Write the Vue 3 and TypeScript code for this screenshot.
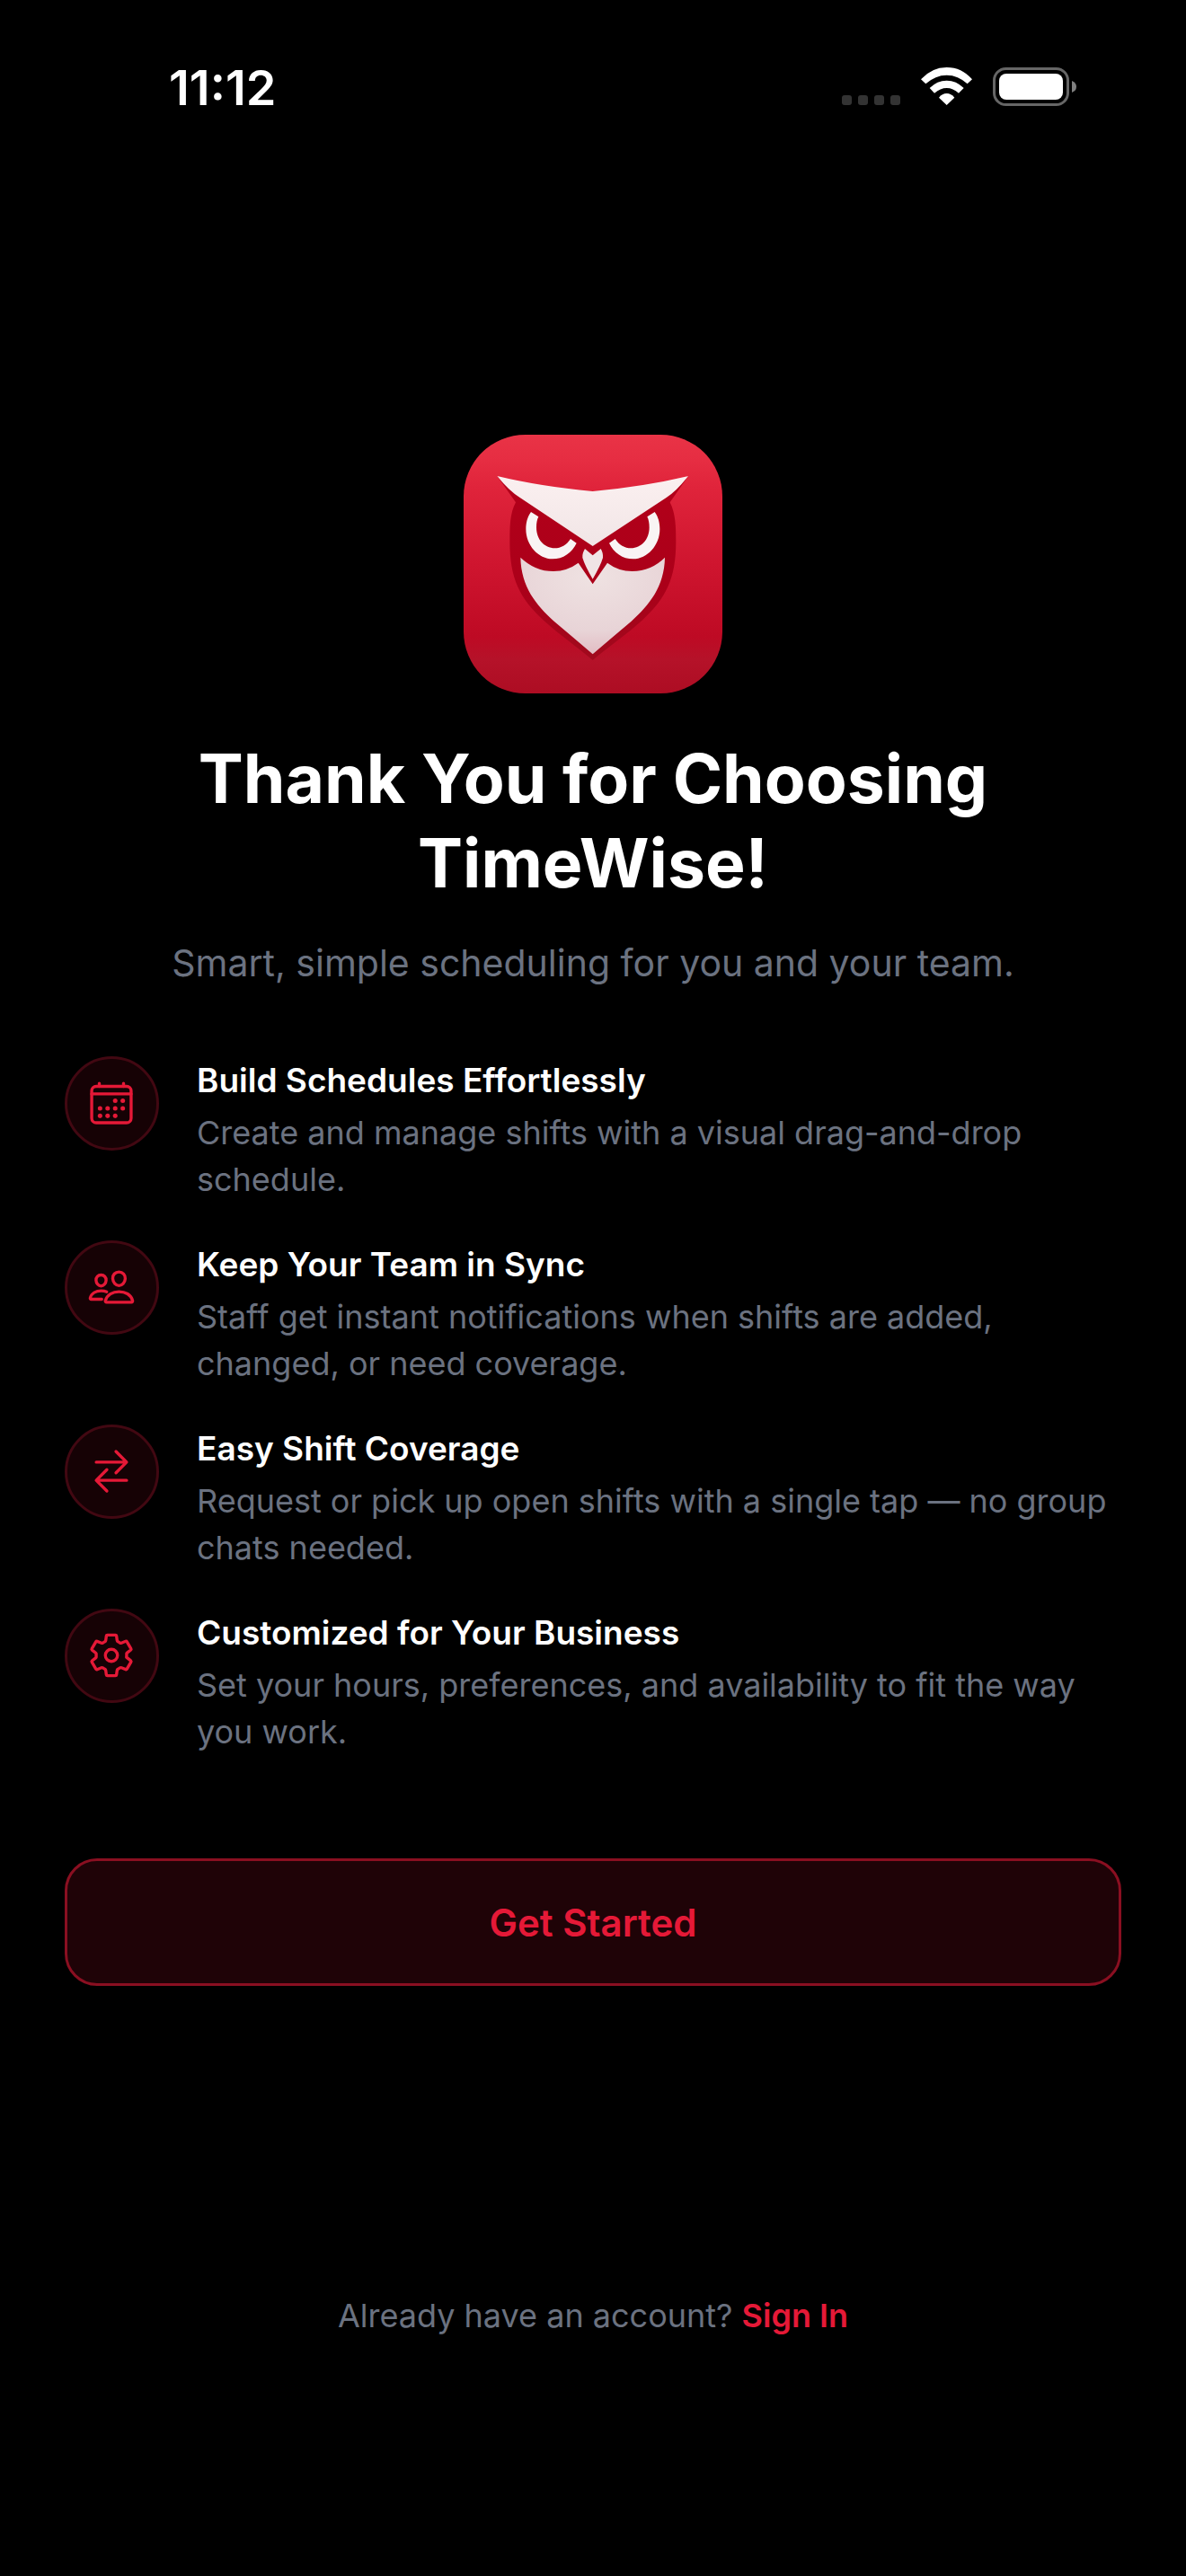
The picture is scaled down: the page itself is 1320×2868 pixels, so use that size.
<script setup lang="ts">
interface Feature {
  icon: 'calendar' | 'people' | 'swap' | 'settings'
  title: string
  text: string
}

const features: Feature[] = [
  {
    icon: 'calendar',
    title: 'Build Schedules Effortlessly',
    text: 'Create and manage shifts with a visual drag-and-drop schedule.',
  },
  {
    icon: 'people',
    title: 'Keep Your Team in Sync',
    text: 'Staff get instant notifications when shifts are added, changed, or need coverage.',
  },
  {
    icon: 'swap',
    title: 'Easy Shift Coverage',
    text: 'Request or pick up open shifts with a single tap — no group chats needed.',
  },
  {
    icon: 'settings',
    title: 'Customized for Your Business',
    text: 'Set your hours, preferences, and availability to fit the way you work.',
  },
]

const calendarDots: [number, number][] = [
  [296, 232], [376, 232],
  [136, 312], [216, 312], [296, 312], [376, 312],
  [136, 392], [216, 392], [296, 392],
]
</script>

<template>
  <div class="screen">
    <header class="status">
      <time class="clock">11:12</time>
      <div class="indicators">
        <svg class="cell" viewBox="0 0 65 11" aria-hidden="true">
          <rect v-for="n in 4" :key="n" :x="(n - 1) * 18" y="0" width="11" height="11" rx="3" />
        </svg>
        <svg class="wifi" viewBox="0 0 171 126" aria-hidden="true">
          <path d="M0 40Q36 0 86 0T171 40L155 55Q124 26 86 26T16 55Z" />
          <path d="M29 69Q54 44 86 44T143 69L126 86Q107 69 86 69T45 86Z" />
          <path d="M60 101Q71 87 86 87T112 101L86 126Z" />
        </svg>
        <svg class="battery" viewBox="0 0 93 43" aria-hidden="true">
          <rect x="1.5" y="1.5" width="82" height="40" rx="13" fill="none" stroke="#666" stroke-width="3" />
          <rect x="7" y="7" width="71" height="29" rx="8" fill="#fff" />
          <path d="M88 15q5 2 5 6.500t-5 6.500z" fill="#808080" />
        </svg>
      </div>
    </header>

    <main class="content">
      <svg class="logo" viewBox="48 42 864 864" role="img" aria-label="TimeWise">
        <defs>
          <linearGradient id="tile" x1="0" y1="0" x2="0" y2="1">
            <stop offset="0" stop-color="#e93346" />
            <stop offset="0.1" stop-color="#e62d42" />
            <stop offset="0.2" stop-color="#e0243b" />
            <stop offset="0.5" stop-color="#cf152f" />
            <stop offset="0.78" stop-color="#be0a24" />
            <stop offset="0.87" stop-color="#b51229" />
            <stop offset="1" stop-color="#ad0d23" />
          </linearGradient>
          <linearGradient id="body" x1="0" y1="0" x2="0" y2="1">
            <stop offset="0" stop-color="#b3001a" />
            <stop offset="0.6" stop-color="#ab0019" />
            <stop offset="1" stop-color="#a00a1d" />
          </linearGradient>
          <linearGradient id="brow" x1="0" y1="0" x2="0" y2="1">
            <stop offset="0" stop-color="#fbf0f0" />
            <stop offset="1" stop-color="#f1e5e6" />
          </linearGradient>
          <radialGradient id="face" cx="0.5" cy="0.2" r="0.8">
            <stop offset="0" stop-color="#efe2e2" />
            <stop offset="0.7" stop-color="#e8d4d7" />
            <stop offset="1" stop-color="#e2bcc3" />
          </radialGradient>
        </defs>
        <rect x="48" y="42" width="864" height="864" rx="206" fill="url(#tile)" />
        <path
          fill="url(#body)"
          d="M160 180L222 268C202 305 202 350 202 400C202 520 235 590 315 662C370 712 430 752 479 795C528 752 589 712 644 662C724 590 757 520 757 400C757 350 756 305 737 268L798 180L479 300Z"
        />
        <path
          fill="url(#brow)"
          d="M160 180Q300 214 479 231Q658 214 798 180Q760 230 725 252L479 414L236 252Q200 230 160 180Z"
        />
        <path
          id="eye"
          fill="#f9f4f4"
          d="M273 300C260 318 256 338 256 357C256 412 298 457 345 457C380 457 410 436 425 404L405 390C392 410 373 421 352 421C318 421 291 392 291 352C291 338 293 326 298 316Z"
        />
        <use href="#eye" transform="translate(959 0) scale(-1 1)" />
        <path
          fill="url(#face)"
          d="M238 452Q286 498 348 498Q395 497 431 470L479 541L528 470Q565 498 611 498Q675 497 720 452C718 550 668 610 608 665Q540 722 479 775Q418 722 350 665C290 610 240 550 238 452Z"
        />
        <path fill="#f0e4e5" d="M453 423L479 445L506 423C511 432 514 440 513 453Q505 480 479 524Q453 480 445 453C444 440 448 432 453 423Z" />
      </svg>

      <h1 class="title">Thank You for Choosing TimeWise!</h1>
      <p class="subtitle">Smart, simple scheduling for you and your team.</p>

      <ul class="features">
        <li v-for="feature in features" :key="feature.icon" class="feature">
          <span class="badge">
            <svg class="icon" viewBox="0 0 512 512" aria-hidden="true">
              <template v-if="feature.icon === 'calendar'">
                <rect x="48" y="80" width="416" height="384" rx="48" />
                <path d="M128 48v32M384 48v32M464 160H48" />
                <circle v-for="[x, y] in calendarDots" :key="`${x}-${y}`" class="dot" :cx="x" :cy="y" r="24" />
              </template>
              <template v-else-if="feature.icon === 'people'">
                <path d="M402 168c-2.930 40.670-33.100 72-66 72s-63.120-31.320-66-72c-3-42.310 26.370-72 66-72s69 30.460 66 72z" />
                <path d="M336 304c-65.170 0-127.840 32.370-143.540 95.410-2.080 8.340 3.150 16.590 11.720 16.590h263.650c8.570 0 13.770-8.250 11.720-16.590C463.850 335.360 401.180 304 336 304z" />
                <path d="M200 185.940c-2.340 32.480-26.720 58.060-53 58.060s-50.700-25.570-53-58.060C91.610 152.150 115.340 128 147 128s55.390 24.770 53 57.940z" />
                <path d="M206 306c-18.050-8.270-37.930-11.450-59-11.450-52 0-102.100 25.850-114.650 76.200-1.650 6.660 2.530 13.250 9.370 13.250H154" />
              </template>
              <template v-else-if="feature.icon === 'swap'">
                <path d="M304 48l112 112-112 112M398.870 160H96M208 464L96 352l112-112M114 352h302" />
              </template>
              <template v-else>
                <circle cx="256" cy="256" r="64" />
                <path d="M416.390 256a154.340 154.340 0 0 1-1.530 20.790l45.210 35.460a10.810 10.810 0 0 1 2.450 13.750l-42.770 74a10.810 10.810 0 0 1-13.140 4.590l-44.900-18.080a16.110 16.110 0 0 0-15.170 1.750A164.480 164.480 0 0 1 325 400.800a15.940 15.940 0 0 0-8.820 12.140l-6.730 47.890a11.080 11.080 0 0 1-10.680 9.170h-85.540a11.110 11.110 0 0 1-10.690-8.870l-6.720-47.820a16.070 16.070 0 0 0-9-12.220 155.300 155.300 0 0 1-21.460-12.570 16 16 0 0 0-15.110-1.710l-44.890 18.070a10.810 10.810 0 0 1-13.140-4.580l-42.770-74a10.800 10.800 0 0 1 2.450-13.750l38.210-30a16.050 16.050 0 0 0 6-14.080c-.36-4.170-.58-8.330-.58-12.500s.21-8.270.58-12.350a16 16 0 0 0-6.070-13.940l-38.190-30A10.810 10.810 0 0 1 49.480 186l42.770-74a10.810 10.810 0 0 1 13.140-4.590l44.900 18.080a16.110 16.110 0 0 0 15.170-1.750A164.480 164.480 0 0 1 187 111.200a15.940 15.940 0 0 0 8.820-12.140l6.730-47.890A11.080 11.080 0 0 1 213.230 42h85.540a11.110 11.110 0 0 1 10.690 8.870l6.720 47.820a16.070 16.070 0 0 0 9 12.220 155.300 155.300 0 0 1 21.460 12.570 16 16 0 0 0 15.110 1.710l44.890-18.070a10.810 10.810 0 0 1 13.140 4.580l42.770 74a10.800 10.800 0 0 1-2.450 13.750l-38.210 30a16.050 16.050 0 0 0-6.050 14.080c.33 4.140.55 8.300.55 12.470z" />
              </template>
            </svg>
          </span>
          <div class="copy">
            <h2 class="name">{{ feature.title }}</h2>
            <p class="text">{{ feature.text }}</p>
          </div>
        </li>
      </ul>

      <button type="button" class="start">Get Started</button>
    </main>

    <footer class="footer">
      Already have an account? <a href="#" class="signin">Sign In</a>
    </footer>
  </div>
</template>

<style>
body {
  margin: 0;
  background: #000;
}
</style>

<style scoped>
.screen {
  display: flex;
  flex-direction: column;
  box-sizing: border-box;
  min-height: 100vh;
  background: #000;
  color: #fff;
  font-family: Inter, "Liberation Sans", sans-serif;
}

.status {
  display: flex;
  justify-content: space-between;
  align-items: flex-start;
  box-sizing: border-box;
  height: 177px;
  padding: 66px 122px 0 188px;
}

.clock {
  font-size: 54px;
  font-weight: 600;
  line-height: 64px;
}

.indicators {
  display: flex;
  align-items: flex-end;
  height: 52px;
}

.cell {
  width: 65px;
  height: 11px;
  margin: 0 23px 1px 0;
  fill: #333;
}

.wifi {
  width: 57px;
  height: 42px;
  margin: 0 23px 1px 0;
  fill: #fff;
}

.battery {
  width: 93px;
  height: 43px;
}

.content {
  display: flex;
  flex: 1;
  flex-direction: column;
  align-items: center;
  justify-content: center;
  padding: 0 72px;
}

.logo {
  width: 288px;
  height: 288px;
}

.title {
  margin: 48px 0 0;
  font-size: 75px;
  font-weight: 700;
  line-height: 94px;
  text-align: center;
}

.subtitle {
  margin: 36px 0 0;
  color: #6b7280;
  font-size: 41px;
  line-height: 56px;
  text-align: center;
}

.features {
  display: flex;
  flex-direction: column;
  align-self: stretch;
  gap: 42px;
  margin: 76px 0 115px;
  padding: 0;
  list-style: none;
}

.feature {
  display: flex;
  align-items: flex-start;
  gap: 42px;
}

.badge {
  display: flex;
  flex: none;
  align-items: center;
  justify-content: center;
  box-sizing: border-box;
  width: 105px;
  height: 105px;
  padding: 0 1px 1px 0;
  border: 3px solid #420812;
  border-radius: 50%;
  background: #160205;
}

.icon {
  width: 54px;
  height: 54px;
  fill: none;
  stroke: #e51937;
  stroke-width: 32;
  stroke-linecap: round;
  stroke-linejoin: round;
}

.dot {
  fill: #e51937;
  stroke: none;
}

.copy {
  flex: 1;
  padding-top: 2px;
}

.name {
  margin: 0 0 7px;
  font-size: 37px;
  font-weight: 600;
  line-height: 50px;
}

.text {
  margin: 0;
  color: #6b7280;
  font-size: 36px;
  line-height: 52px;
}

.start {
  align-self: stretch;
  height: 142px;
  border: 3px solid #8a0f21;
  border-radius: 36px;
  background: #1f0307;
  color: #e51937;
  font-family: inherit;
  font-size: 42px;
  font-weight: 600;
}

.footer {
  padding: 34px 72px 264px;
  color: #6b7280;
  font-size: 36px;
  line-height: 52px;
  text-align: center;
}

.signin {
  color: #e51937;
  font-weight: 600;
  text-decoration: none;
}
</style>
